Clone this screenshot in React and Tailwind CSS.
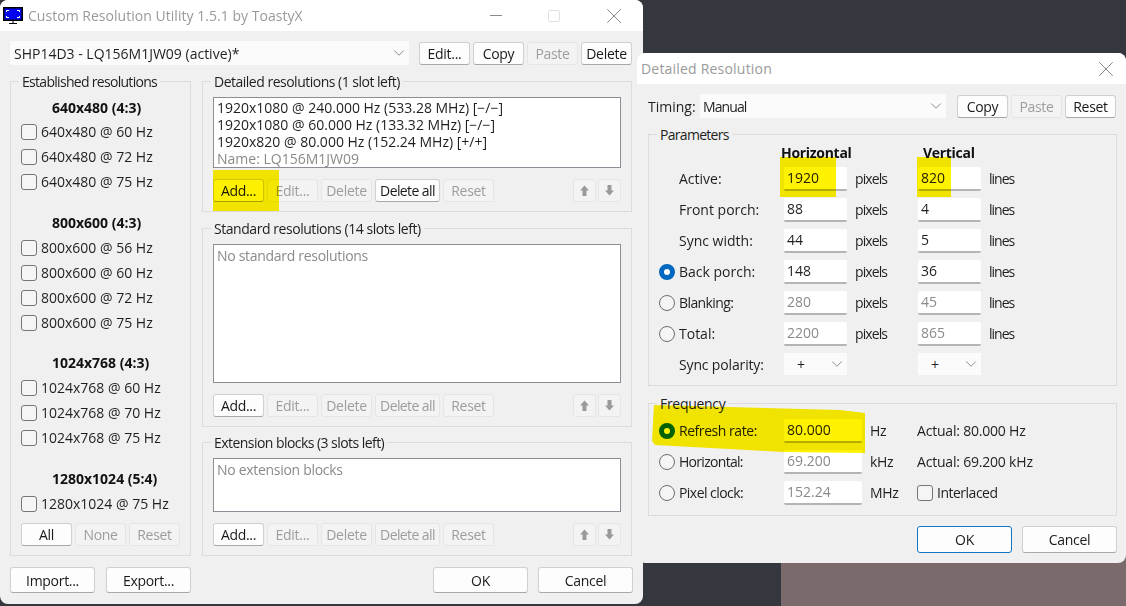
import { ChevronDown, X } from "lucide-react";

const FONT = "font-['Open_Sans','Noto_Sans',sans-serif] text-[14px] leading-[19px]";

function Btn({ children, disabled, className = "w-[51px] h-[23px]", primary }) {
  const look = disabled
    ? "border-[#e5e5e5] bg-[#f3f3f3] text-[#9d9d9d]"
    : primary
      ? "border-[#0f76c8] bg-[#fdfdfd] text-[#1a1a1a]"
      : "border-[#d0d0d0] border-b-[#a8a8a8] bg-[#fdfdfd] text-[#1a1a1a]";
  return <div className={`flex shrink-0 items-center justify-center rounded-[3px] border tracking-[-0.3px] ${look} ${className}`}>{children}</div>;
}

function Arrow({ down }) {
  return (
    <svg width="13" height="13" viewBox="0 0 13 13" className={down ? "rotate-180" : ""}>
      <path d="M6.5 1.5 11 6.5H8.5V12h-4V6.5H2Z" fill="#9a9a9a" />
    </svg>
  );
}

function Check({ label }) {
  return (
    <div className="flex h-[25px] items-center gap-[4px]">
      <span className="size-[16px] shrink-0 rounded-[3px] border border-[#767676] bg-[#f5f5f5]" />
      <span className="text-[#1f1f1f]">{label}</span>
    </div>
  );
}

function Radio({ on }) {
  return on ? (
    <span className="block size-[16px] shrink-0 rounded-full border-[5px] border-[#0067c0] bg-white" />
  ) : (
    <span className="block size-[16px] shrink-0 rounded-full border border-[#6e6e6e] bg-[#f5f5f5]" />
  );
}

function Group({ title, tracking = "tracking-[-0.5px]", className, children }) {
  return (
    <div className={`relative border border-[#dcdcdc] ${className}`}>
      <span className={`absolute left-[8px] top-[-10px] bg-[#f0f0f0] px-[3px] text-[#1f1f1f] ${tracking}`}>{title}</span>
      {children}
    </div>
  );
}

function ActionRow({ deleteAll }) {
  return (
    <div className="mt-[11px] flex h-[23px] gap-[3px]">
      <Btn>Add...</Btn>
      <Btn disabled>Edit...</Btn>
      <Btn disabled>Delete</Btn>
      <Btn disabled={!deleteAll} className="h-[23px] w-[65px] !tracking-[-0.6px]">Delete all</Btn>
      <Btn disabled>Reset</Btn>
      <div className="ml-auto flex gap-[2px]">
        <Btn disabled className="h-[23px] w-[23px]"><Arrow /></Btn>
        <Btn disabled className="h-[23px] w-[23px]"><Arrow down /></Btn>
      </div>
    </div>
  );
}

function ListBox({ height, children }) {
  return <div className={`border border-[#8b8f96] bg-white pl-[3px] pt-[1px] text-[#1f1f1f] ${height}`}>{children}</div>;
}

const established = [
  { head: "640x480 (4:3)", rates: ["640x480 @ 60 Hz", "640x480 @ 72 Hz", "640x480 @ 75 Hz"], headGap: "mb-[2px]", gap: "mb-[19px]" },
  { head: "800x600 (4:3)", rates: ["800x600 @ 56 Hz", "800x600 @ 60 Hz", "800x600 @ 72 Hz", "800x600 @ 75 Hz"], headGap: "mb-[3px]", gap: "mb-[18px]" },
  { head: "1024x768 (4:3)", rates: ["1024x768 @ 60 Hz", "1024x768 @ 70 Hz", "1024x768 @ 75 Hz"], headGap: "mb-[3px]", gap: "mb-[19px]" },
  { head: "1280x1024 (5:4)", rates: ["1280x1024 @ 75 Hz"], headGap: "mb-[3px]", gap: "" },
];

function MainWindow() {
  return (
    <div className="absolute left-0 top-0 flex h-[604px] w-[643px] flex-col overflow-hidden rounded-[8px] bg-[#f0f0f0]">
      <div className="flex h-[31px] shrink-0 items-center bg-white pl-[3px]">
        <svg width="20" height="17" viewBox="0 0 20 17" className="shrink-0">
          <rect x="0.75" y="0.75" width="18.5" height="12.5" fill="#0000f0" stroke="#000" strokeWidth="1.5" />
          <path d="M3.5 5V3.5H6M14 3.5h2.5V5M3.5 9v1.5H6M14 10.500h2.500V9" stroke="#fff" fill="none" />
          <path d="M10 14v2M6 16.500h8" stroke="#000" />
        </svg>
        <span className="ml-[5px] tracking-[0.03px] text-[#9a9a9a]">Custom Resolution Utility 1.5.1 by ToastyX</span>
        <div className="ml-auto flex items-center">
          <span className="h-px w-[12px] bg-[#8a8a8a]" />
          <span className="ml-[46px] size-[12px] rounded-[2px] border border-[#e0e0e0]" />
          <X size={26} strokeWidth={0.8} className="ml-[41px] mr-[16px] text-[#777]" />
        </div>
      </div>

      <div className="flex h-[50px] shrink-0 items-start px-[10px] pt-[10px]">
        <div className="flex h-[24px] w-[399px] items-center justify-between rounded-[2px] bg-[#fbfbfb] pl-[4px] pr-[1px] text-[#1f1f1f]">
          SHP14D3 - LQ156M1JW09 (active)*
          <ChevronDown size={18} strokeWidth={1} className="text-[#666]" />
        </div>
        <div className="ml-[10px] mt-[1px] flex gap-[3px]">
          <Btn>Edit...</Btn>
          <Btn>Copy</Btn>
          <Btn disabled>Paste</Btn>
          <Btn>Delete</Btn>
        </div>
      </div>

      <div className="flex gap-[11px] px-[10px]">
        <Group title="Established resolutions" tracking="tracking-[-0.7px]" className="h-[475px] w-[181px] shrink-0 px-[10px] pt-[16px]">
          {established.map((block) => (
            <div key={block.head} className={block.gap}>
              <div className={`pl-[31px] font-bold text-[#111] ${block.headGap}`}>{block.head}</div>
              {block.rates.map((rate) => <Check key={rate} label={rate} />)}
            </div>
          ))}
          <div className="absolute bottom-[9px] left-[10px] flex gap-[3px]">
            <Btn>All</Btn>
            <Btn disabled>None</Btn>
            <Btn disabled>Reset</Btn>
          </div>
        </Group>

        <div className="flex w-[430px] flex-col">
          <Group title="Detailed resolutions (1 slot left)" className="h-[131px] shrink-0 px-[10px] pt-[15px]">
            <ListBox height="h-[71px]">
              <div className="leading-[17px]">1920x1080 @ 240.000 Hz (533.28 MHz) [−/−]</div>
              <div className="leading-[17px]">1920x1080 @ 60.000 Hz (133.32 MHz) [−/−]</div>
              <div className="leading-[17px]">1920x820 @ 80.000 Hz (152.24 MHz) [+/+]</div>
              <div className="leading-[17px] text-[#8a8a8a]">Name: LQ156M1JW09</div>
            </ListBox>
            <ActionRow deleteAll />
          </Group>
          <Group title="Standard resolutions (14 slots left)" tracking="tracking-[-0.45px]" className="mt-[16px] h-[199px] shrink-0 px-[10px] pt-[15px]">
            <ListBox height="h-[139px]"><span className="tracking-[-0.3px] text-[#8a8a8a]">No standard resolutions</span></ListBox>
            <ActionRow />
          </Group>
          <Group title="Extension blocks (3 slots left)" tracking="tracking-[-0.55px]" className="mt-[15px] h-[114px] shrink-0 px-[10px] pt-[15px]">
            <ListBox height="h-[54px]"><span className="tracking-[-0.3px] text-[#8a8a8a]">No extension blocks</span></ListBox>
            <ActionRow />
          </Group>
        </div>
      </div>

      <div className="mt-[11px] flex px-[10px]">
        <Btn className="h-[26px] w-[85px]">Import...</Btn>
        <Btn className="ml-[11px] h-[26px] w-[85px]">Export...</Btn>
        <Btn className="ml-auto h-[26px] w-[95px]">OK</Btn>
        <Btn className="ml-[10px] h-[26px] w-[95px]">Cancel</Btn>
      </div>

      {/* marker stroke */}
      <div className="absolute left-[213px] top-[170px] h-[41px] w-[66px] bg-[#fff200] mix-blend-multiply" />
    </div>
  );
}

function Field({ value, muted, w = "w-[63px]" }) {
  return (
    <div className={`flex h-[24px] shrink-0 items-center rounded-[2px] border-b-2 border-b-[#b4b4b4] bg-white pl-[3px] ${w} ${muted ? "text-[#8a8a8a]" : "text-[#1f1f1f]"}`}>
      {value}
    </div>
  );
}

function Polarity() {
  return (
    <div className="flex h-[22px] w-[63px] shrink-0 items-center justify-between bg-[#fbfbfb] pl-[13px] pr-[1px] text-[#1f1f1f]">
      +
      <ChevronDown size={18} strokeWidth={1} className="text-[#666]" />
    </div>
  );
}

const params = [
  { label: "Active:", h: "1920", v: "820" },
  { label: "Front porch:", h: "88", v: "4" },
  { label: "Sync width:", h: "44", v: "5" },
  { label: "Back porch:", h: "148", v: "36", radio: "on" },
  { label: "Blanking:", h: "280", v: "45", radio: "off", muted: true, track: "tracking-[-0.6px]" },
  { label: "Total:", h: "2200", v: "865", radio: "off", muted: true },
];

function ParamRow({ row }) {
  return (
    <div className="flex h-[31px] items-center text-[#1f1f1f]">
      <div className="flex w-[125px] shrink-0 items-center">
        <span className="flex w-[20px] shrink-0">{row.radio && <Radio on={row.radio === "on"} />}</span>
        <span className={row.track}>{row.label}</span>
      </div>
      <Field value={row.h} muted={row.muted} />
      <span className="ml-[8px] w-[63px] shrink-0 tracking-[-0.9px]">pixels</span>
      <Field value={row.v} muted={row.muted} />
      <span className="ml-[8px] tracking-[-1px]">lines</span>
    </div>
  );
}

function FreqRow({ label, value, unit, actual, on, muted, track }) {
  return (
    <div className="flex h-[31px] items-center text-[#1f1f1f]">
      <div className="flex w-[125px] shrink-0 items-center">
        <span className="flex w-[20px] shrink-0"><Radio on={on} /></span>
        <span className={track}>{label}</span>
      </div>
      <Field value={value} muted={muted} w="w-[78px]" />
      <span className="ml-[8px] w-[47px] shrink-0 tracking-[-0.3px]">{unit}</span>
      {actual}
    </div>
  );
}

function DetailDialog() {
  return (
    <div className="absolute left-[637px] top-[53px] flex h-[510px] w-[489px] flex-col overflow-hidden rounded-[8px] bg-[#f0f0f0]">
      <div className="flex h-[31px] shrink-0 items-center justify-between bg-white pl-[4px] pr-[7px]">
        <span className="tracking-[0.2px] text-[#9a9a9a]">Detailed Resolution</span>
        <X size={26} strokeWidth={0.8} className="text-[#777]" />
      </div>
      <div className="flex h-[44px] shrink-0 items-center pl-[11px]">
        <span className="w-[52px] text-[#1f1f1f]">Timing:</span>
        <div className="flex h-[24px] w-[246px] items-center justify-between bg-[#fbfbfb] pl-[3px] pr-[1px] tracking-[-0.9px] text-[#1f1f1f]">
          Manual
          <ChevronDown size={18} strokeWidth={1} className="text-[#666]" />
        </div>
        <div className="ml-[11px] flex gap-[3px]">
          <Btn>Copy</Btn>
          <Btn disabled>Paste</Btn>
          <Btn>Reset</Btn>
        </div>
      </div>
      <Group title="Parameters" tracking="tracking-[-0.7px]" className="ml-[11px] mr-[9px] mt-[6px] h-[252px] shrink-0 px-[10px] pt-[8px]">
        <div className="flex h-[20px] font-bold tracking-[-0.3px] text-[#111]">
          <span className="ml-[122px] w-[142px]">Horizontal</span>
          <span>Vertical</span>
        </div>
        {params.map((row) => <ParamRow key={row.label} row={row} />)}
        <div className="flex h-[30px] items-center">
          <span className="w-[125px] shrink-0 pl-[20px] tracking-[-0.15px] text-[#1f1f1f]">Sync polarity:</span>
          <Polarity />
          <span className="w-[71px] shrink-0" />
          <Polarity />
        </div>
      </Group>
      <Group title="Frequency" tracking="tracking-[-0.3px]" className="ml-[11px] mr-[9px] mt-[17px] h-[113px] shrink-0 px-[10px] pt-[11px]">
        <FreqRow label="Refresh rate:" track="tracking-[-0.45px]" value="80.000" unit="Hz" on actual={<span className="tracking-[-0.2px]">Actual: 80.000 Hz</span>} />
        <FreqRow label="Horizontal:" track="tracking-[-0.7px]" value="69.200" unit="kHz" muted actual={<span className="tracking-[-0.2px]">Actual: 69.200 kHz</span>} />
        <FreqRow
          label="Pixel clock:"
          track="tracking-[-0.55px]"
          value="152.24"
          unit="MHz"
          muted
          actual={
            <div className="flex items-center gap-[4px]">
              <span className="size-[16px] rounded-[3px] border border-[#767676] bg-[#f5f5f5]" />
              <span className="tracking-[-0.5px]">Interlaced</span>
            </div>
          }
        />
      </Group>
      <div className="mt-[10px] flex justify-end gap-[10px] pr-[9px]">
        <Btn primary className="h-[27px] w-[95px]">OK</Btn>
        <Btn className="h-[27px] w-[95px]">Cancel</Btn>
      </div>

      {/* marker strokes */}
      <div className="absolute left-[143px] top-[104px] h-[40px] w-[56px] bg-[#fff200] mix-blend-multiply" />
      <div className="absolute left-[280px] top-[104px] h-[40px] w-[34px] bg-[#fff200] mix-blend-multiply" />
      <svg width="213" height="48" viewBox="0 0 213 48" className="absolute left-[15px] top-[352px] mix-blend-multiply">
        <path d="M2 0 188 5 213 8V48L132 47 3 40 0 36Z" fill="#fff200" />
      </svg>
    </div>
  );
}

export default function App() {
  return (
    <div className={`relative h-[606px] w-[1126px] overflow-hidden bg-[#35373e] ${FONT}`}>
      <div className="absolute bottom-0 left-[781px] right-0 h-[60px] bg-[#7a6a6c]" />
      <MainWindow />
      <DetailDialog />
    </div>
  );
}
